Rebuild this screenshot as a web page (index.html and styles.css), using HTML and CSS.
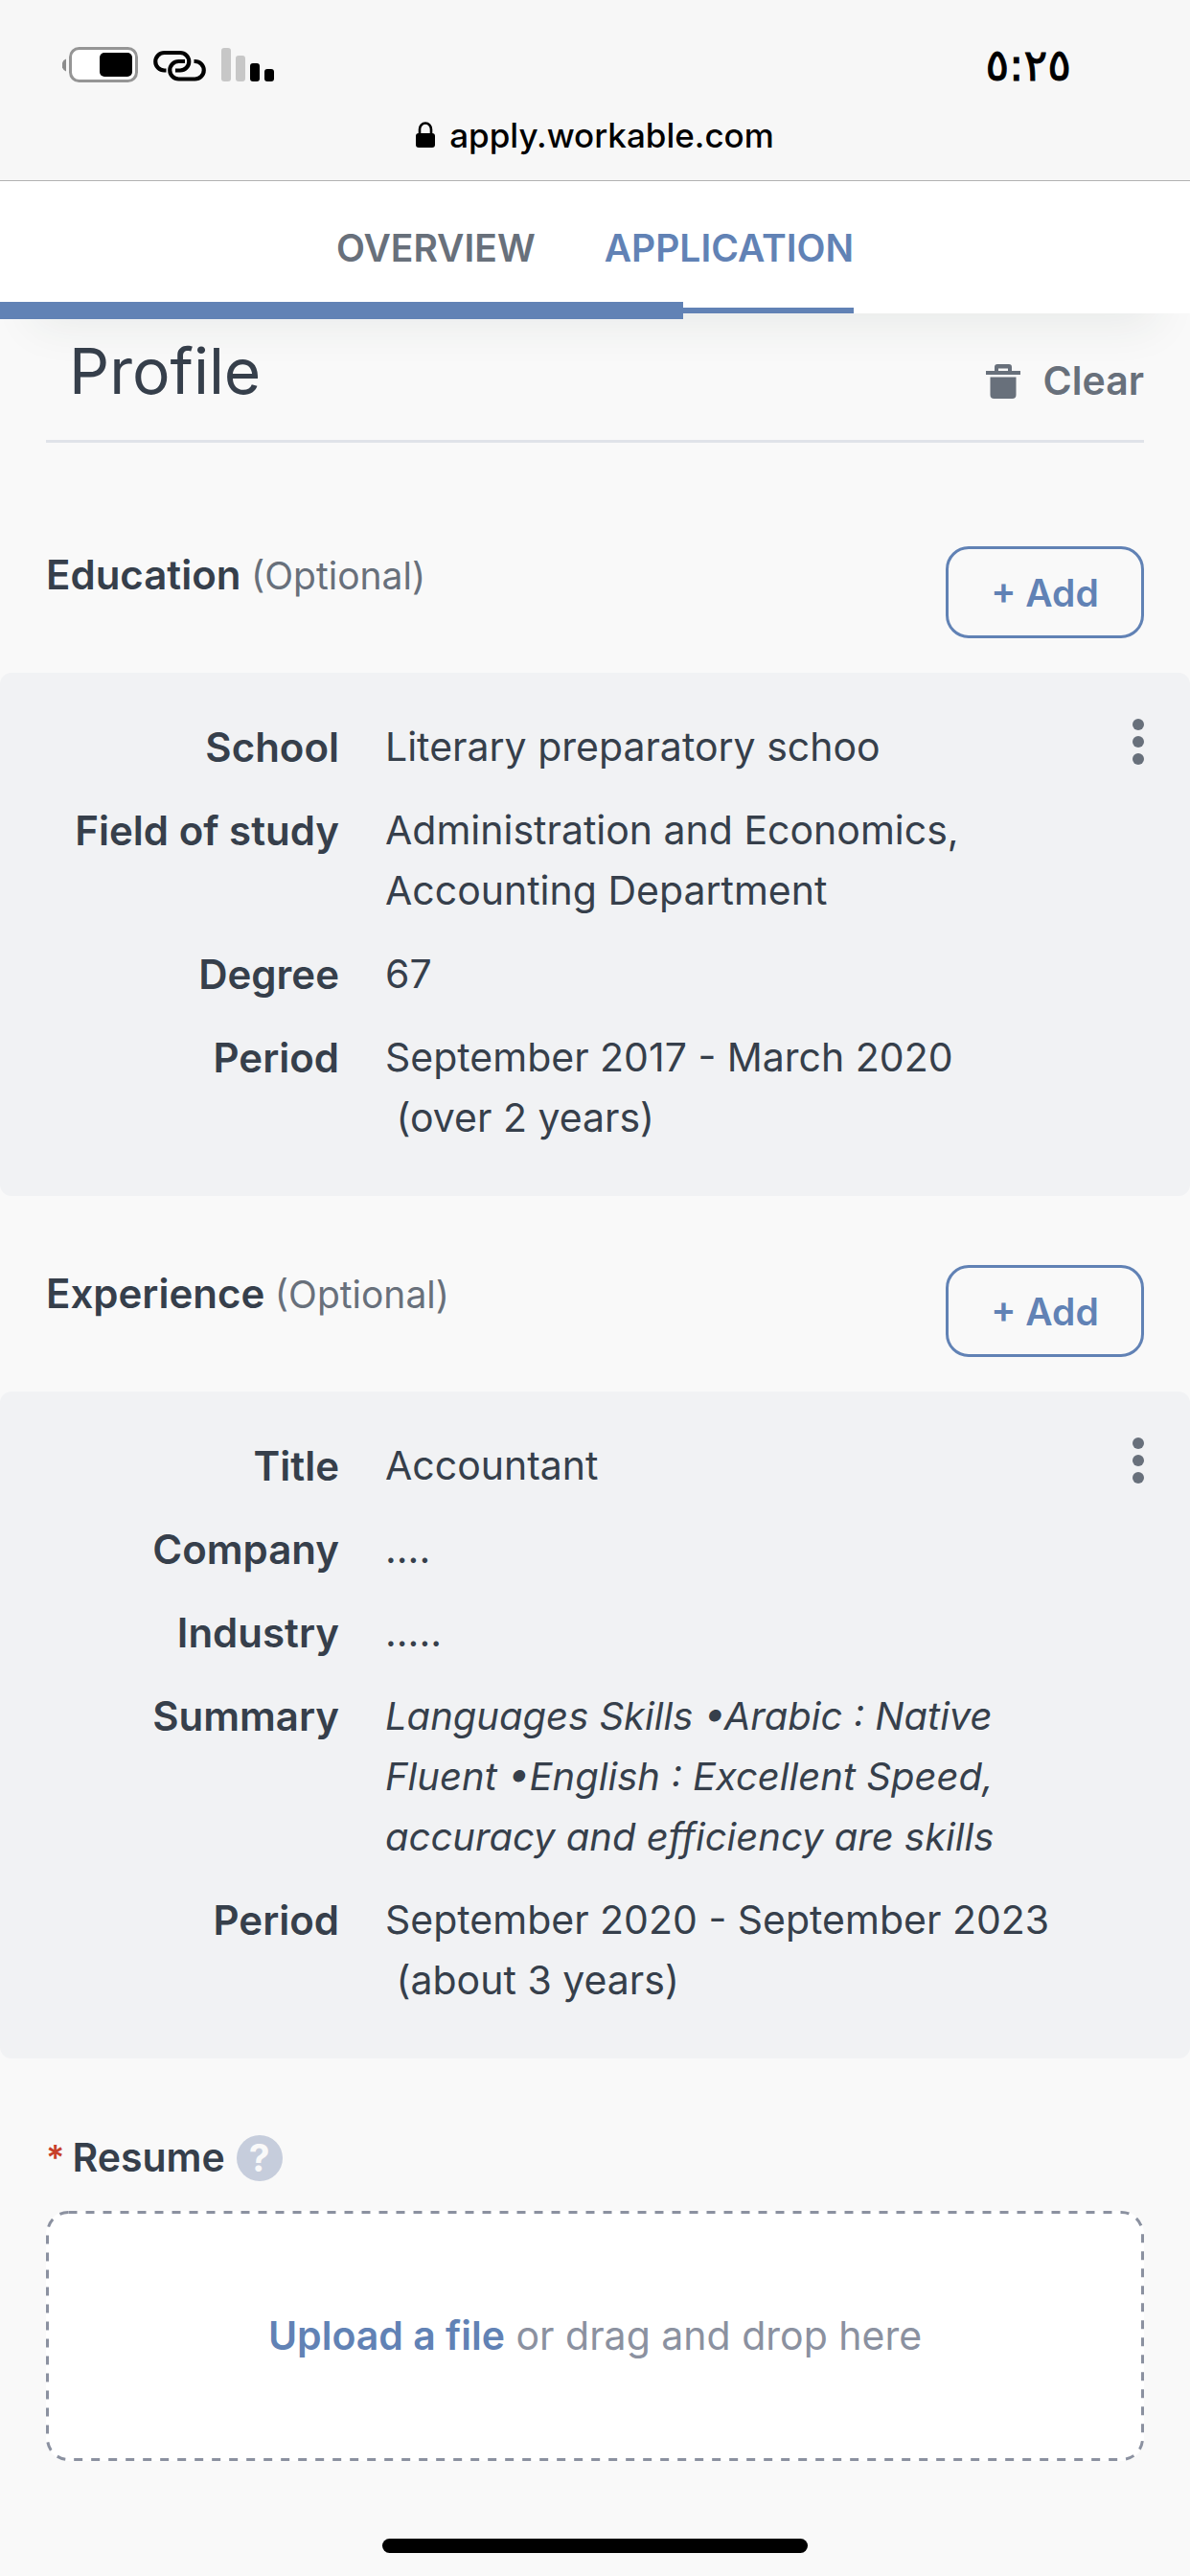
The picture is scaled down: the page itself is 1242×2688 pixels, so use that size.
FILE: index.html
```html
<!DOCTYPE html>
<html lang="en">
<head>
<meta charset="utf-8">
<meta name="viewport" content="width=device-width, initial-scale=1">
<title>Application</title>
<link rel="stylesheet" href="styles.css">
</head>
<body>
<div class="chrome">
  <div class="status">
    <div class="status-icons">
      <svg class="battery" width="80" height="38" viewBox="0 0 80 38" aria-hidden="true">
        <path d="M4 12.500a7 7 0 0 0 0 13z" fill="#8c8c8c"/>
        <rect x="8.500" y="1.500" width="69" height="34" rx="9" fill="#fff" stroke="#959595" stroke-width="3"/>
        <rect x="39" y="6" width="34" height="25" rx="5"/>
      </svg>
      <svg class="link-icon" width="56" height="34" viewBox="0 0 56 34" fill="none" stroke="#000" stroke-width="4.200" stroke-linecap="butt" aria-hidden="true">
        <path d="M13.500 22.500H11.500a9.200 9.200 0 0 1 0-18.500H28a9.200 9.200 0 0 1 0 18.500H23"/>
        <path d="M33 13H26.500a9.200 9.200 0 0 0 0 18.500H43.500a9.200 9.200 0 0 0 0-18.500H42.500"/>
      </svg>
      <svg class="signal" width="56" height="36" viewBox="0 0 56 36" aria-hidden="true">
        <rect x="0" y="0" width="10" height="35" rx="3" fill="#c7c7c7"/>
        <rect x="15" y="8" width="10" height="27" rx="3" fill="#c7c7c7"/>
        <rect x="30" y="16" width="10" height="19" rx="3"/>
        <rect x="45" y="22" width="10" height="13" rx="3"/>
      </svg>
    </div>
    <time class="clock" lang="ar">٥:٢٥</time>
  </div>
  <div class="address">
    <svg width="20" height="28" viewBox="0 0 20 28" aria-hidden="true">
      <rect x="0" y="12" width="20" height="15" rx="3"/>
      <path d="M4 13V8a6 6.500 0 0 1 12 0v5" fill="none" stroke="#000" stroke-width="2.600"/>
    </svg>
    <span>apply.workable.com</span>
  </div>
</div>

<header class="header">
  <nav class="tabs">
    <a class="tab" href="#overview">OVERVIEW</a>
    <a class="tab tab-active" href="#application" aria-current="page">APPLICATION</a>
  </nav>
  <div class="progress"></div>
</header>

<main>
  <div class="profile">
    <h1>Profile</h1>
    <button class="clear" type="button">
      <svg width="36" height="36" viewBox="0 0 36 36" fill="currentColor" aria-hidden="true">
        <path fill-rule="evenodd" d="M9 7V3q0-3 3-3h12q3 0 3 3v4h9v4H0V7zM13 7h10V4.500H13z"/>
        <path d="M4.500 13.500h27V32q0 4-4 4h-19q-4 0-4-4z"/>
      </svg>
      Clear
    </button>
  </div>

  <section>
    <div class="section-head">
      <h2>Education <span class="optional">(Optional)</span></h2>
      <button class="add" type="button">+ Add</button>
    </div>
    <div class="card">
      <dl class="details">
        <dt>School</dt><dd>Literary preparatory schoo</dd>
        <dt>Field of study</dt><dd>Administration and Economics, Accounting Department</dd>
        <dt>Degree</dt><dd>67</dd>
        <dt>Period</dt><dd>September 2017 - March 2020 <span class="duration">&nbsp;(over 2 years)</span></dd>
      </dl>
      <button class="more" type="button" aria-label="More options">
        <svg width="12" height="48" viewBox="0 0 12 48" fill="currentColor"><circle cx="6" cy="6" r="6"/><circle cx="6" cy="24" r="6"/><circle cx="6" cy="42" r="6"/></svg>
      </button>
    </div>
  </section>

  <section>
    <div class="section-head">
      <h2>Experience <span class="optional">(Optional)</span></h2>
      <button class="add" type="button">+ Add</button>
    </div>
    <div class="card">
      <dl class="details">
        <dt>Title</dt><dd>Accountant</dd>
        <dt>Company</dt><dd>....</dd>
        <dt>Industry</dt><dd>.....</dd>
        <dt>Summary</dt><dd class="summary">Languages Skills •Arabic : Native Fluent •English : Excellent Speed, accuracy and efficiency are skills</dd>
        <dt>Period</dt><dd>September 2020 - September 2023 <span class="duration">&nbsp;(about 3 years)</span></dd>
      </dl>
      <button class="more" type="button" aria-label="More options">
        <svg width="12" height="48" viewBox="0 0 12 48" fill="currentColor"><circle cx="6" cy="6" r="6"/><circle cx="6" cy="24" r="6"/><circle cx="6" cy="42" r="6"/></svg>
      </button>
    </div>
  </section>

  <section class="resume">
    <div class="resume-head">
      <label class="resume-label" for="resume"><span class="required">*</span>Resume</label>
      <button class="help" type="button" aria-label="Help">?</button>
    </div>
    <div class="drop">
      <svg class="drop-outline" aria-hidden="true"><rect class="drop-dashes" x="1.500" y="1.500" rx="22"/></svg>
      <input class="file" id="resume" type="file">
      <p><label class="upload" for="resume">Upload a file</label> or drag and drop here</p>
    </div>
  </section>
</main>
<div class="home-bar"></div>
</body>
</html>
```

FILE: styles.css
```css
* {
  box-sizing: border-box;
}

body {
  margin: 0;
  background: #f9f9f9;
  color: #363f4b;
  font-family: Inter, "Liberation Sans", sans-serif;
  font-size: 41px;
  line-height: 63px;
}

h1, h2, dl, dd, p {
  margin: 0;
}

button {
  padding: 0;
  border: 0;
  background: none;
  font: inherit;
  cursor: pointer;
}

svg {
  display: block;
  flex: none;
}

/* Browser chrome */
.chrome {
  padding-top: 42px;
  background: #f7f7f7;
  border-bottom: 1px solid #b2b2b2;
  color: #000;
}

.status {
  display: flex;
  justify-content: space-between;
  align-items: center;
  height: 52px;
  padding: 0 124px 0 65px;
}

.status-icons {
  display: flex;
  align-items: center;
  gap: 15px;
}

.clock {
  font-family: "DejaVu Sans", sans-serif;
  font-size: 46px;
  line-height: 52px;
  -webkit-text-stroke: 1px #000;
}

.address {
  display: flex;
  justify-content: center;
  align-items: center;
  gap: 15px;
  height: 94px;
  font-size: 35px;
  font-weight: 500;
}

/* Tab header */
.header {
  position: relative;
  z-index: 1;
  background: #fff;
  box-shadow: 0 48px 48px -36px rgba(40, 60, 50, 0.08);
}

.tabs {
  display: flex;
  justify-content: center;
  gap: 72px;
}

.tab {
  height: 138px;
  border-bottom: 6px solid transparent;
  color: #68707b;
  font-size: 39px;
  font-weight: 600;
  line-height: 140px;
  text-decoration: none;
}

.tab-active {
  border-color: #6182b5;
  color: #6182b5;
}

/* Completion bar laid over the bottom edge of the header */
.progress {
  position: absolute;
  left: 0;
  bottom: -6px;
  width: 57.400%;
  height: 18px;
  background: #6182b5;
}

/* Profile */
.profile {
  display: flex;
  justify-content: space-between;
  align-items: flex-end;
  margin: 0 48px;
  padding: 18px 0 30px 24px;
  border-bottom: 3px solid #e0e3e9;
}

h1 {
  font-size: 66px;
  font-weight: 400;
  line-height: 84px;
}

.clear {
  display: flex;
  align-items: center;
  gap: 24px;
  color: #68707b;
  font-weight: 600;
}

.section-head {
  display: flex;
  justify-content: space-between;
  align-items: flex-start;
  padding: 0 48px 36px;
}

section .section-head {
  padding-top: 72px;
}

.profile + section .section-head {
  padding-top: 108px;
}

h2 {
  font-size: 42px;
  font-weight: 600;
  line-height: 60px;
}

.optional {
  color: #68707b;
  font-size: 39px;
  font-weight: 400;
}

.add {
  width: 207px;
  height: 96px;
  border: 3px solid #6182b5;
  border-radius: 24px;
  color: #6182b5;
  font-size: 39px;
  font-weight: 600;
}

/* Entry cards */
.card {
  display: flex;
  justify-content: space-between;
  align-items: flex-start;
  padding: 46px 48px 50px 0;
  border-radius: 12px;
  background: #f1f2f4;
}

.details {
  display: grid;
  grid-template-columns: 354px minmax(0, 720px);
  gap: 24px 48px;
}

dt {
  font-size: 42px;
  font-weight: 600;
  text-align: right;
}

.summary {
  font-size: 40px;
  font-style: italic;
}

.duration {
  display: block;
}

.more {
  padding-top: 2px;
  color: #68707b;
}

/* Resume upload */
.resume {
  padding: 72px 48px 81px;
}

.resume-head {
  display: flex;
  align-items: center;
  gap: 12px;
  padding-bottom: 24px;
  font-weight: 600;
}

.resume-label {
  display: flex;
  gap: 8px;
}

.required {
  color: #c7402a;
  font-size: 36px;
}

.help {
  width: 48px;
  height: 48px;
  border-radius: 50%;
  background: #c6cddc;
  color: #f9f9f9;
  font-size: 39px;
  font-weight: 700;
  line-height: 48px;
}

.drop {
  position: relative;
  padding: 99px 24px;
  border-radius: 24px;
  background: #fff;
  color: #8b91a0;
  text-align: center;
}

/* Dashed outline laid over the drop area */
.drop-outline {
  position: absolute;
  inset: 0;
  width: 100%;
  height: 100%;
  pointer-events: none;
}

.drop-dashes {
  width: calc(100% - 3px);
  height: calc(100% - 3px);
  fill: none;
  stroke: #8b91a0;
  stroke-width: 3px;
  stroke-dasharray: 9 9;
}

.file {
  position: absolute;
  width: 1px;
  height: 1px;
  opacity: 0;
}

.upload {
  color: #6182b5;
  font-weight: 600;
  cursor: pointer;
}

.home-bar {
  width: 444px;
  height: 15px;
  margin: 0 auto 24px;
  border-radius: 8px;
  background: #000;
}
```
